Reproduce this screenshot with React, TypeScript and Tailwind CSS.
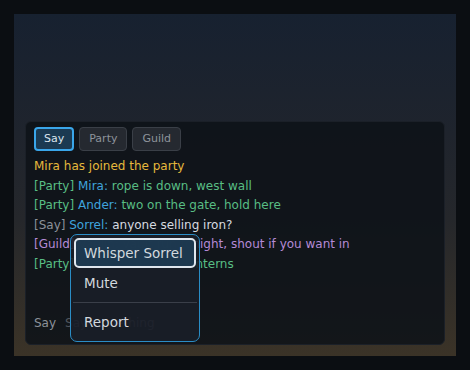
import React from "react";

export default function App() {
  return (
    <div className="w-[470px] h-[370px] bg-[#0b0e12] p-[14px] font-['DejaVu_Sans',sans-serif]">
      <div className="w-full h-full flex flex-col justify-end px-[11px] pb-[11px] bg-[linear-gradient(180deg,#172130_0%,#1f242d_35%,#25272b_60%,#3b3327_100%)]">
        <div className="relative h-[224px] flex flex-col rounded-[6px] bg-[#0e1218]/[0.88] border border-[#1b2028] pt-[5px] pl-[8px] pr-[8px] pb-[11px]">
          <div className="flex gap-[5px] text-[11px]">
            <div className="h-[24px] px-[8px] flex items-center rounded-[4px] border-2 border-[#3aa6ea] bg-[#1b3a52] text-[#dbe6ef]">
              Say
            </div>
            <div className="h-[24px] px-[9px] flex items-center rounded-[4px] border border-[#3a3f47] bg-[#252930] text-[#8d939b]">
              Party
            </div>
            <div className="h-[24px] px-[9px] flex items-center rounded-[4px] border border-[#3a3f47] bg-[#252930] text-[#8d939b]">
              Guild
            </div>
          </div>
          <div className="mt-[6px] text-[12px] leading-[19.5px] whitespace-nowrap">
            <div className="text-[#e6b93c]">Mira has joined the party</div>
            <div className="text-[#58bd84]">
              [Party] <span className="text-[#3fa3dc]">Mira:</span> rope is down, west wall
            </div>
            <div className="text-[#58bd84]">
              [Party] <span className="text-[#3fa3dc]">Ander:</span> two on the gate, hold here
            </div>
            <div className="text-[#8b9199]">
              [Say] <span className="text-[#3fa3dc]">Sorrel:</span>{" "}
              <span className="text-[#d6dae0]">anyone selling iron?</span>
            </div>
            <div className="text-[#b48ad6]">[Guild] Vaelin: vault run tonight, shout if you want in</div>
            <div className="text-[#58bd84]">[Party] Ander: watch the lanterns</div>
          </div>
          <div className="mt-auto flex items-center gap-[9px] text-[12px] leading-[20px]">
            <span className="text-[#8b9199]">Say</span>
            <span className="text-[#50555d]">Say something</span>
          </div>

          <div className="absolute left-[44px] top-[112px] w-[130px] rounded-[7px] border-[1.5px] border-[#2a8dc6] bg-[#1a1e28]/[0.9] p-[3px] pb-[4px] text-[13.5px] text-[#d3d8de]">
            <div className="h-[30px] flex items-center px-[8px] rounded-[5px] border-2 border-[#dfe6ee] bg-[#1e3a51]/[0.95]">
              Whisper Sorrel
            </div>
            <div className="h-[30px] flex items-center px-[10px]">Mute</div>
            <div className="my-[4px] -mx-[1px] h-px bg-[#3a3f49]" />
            <div className="h-[30px] flex items-center px-[10px]">Report</div>
          </div>
        </div>
      </div>
    </div>
  );
}
